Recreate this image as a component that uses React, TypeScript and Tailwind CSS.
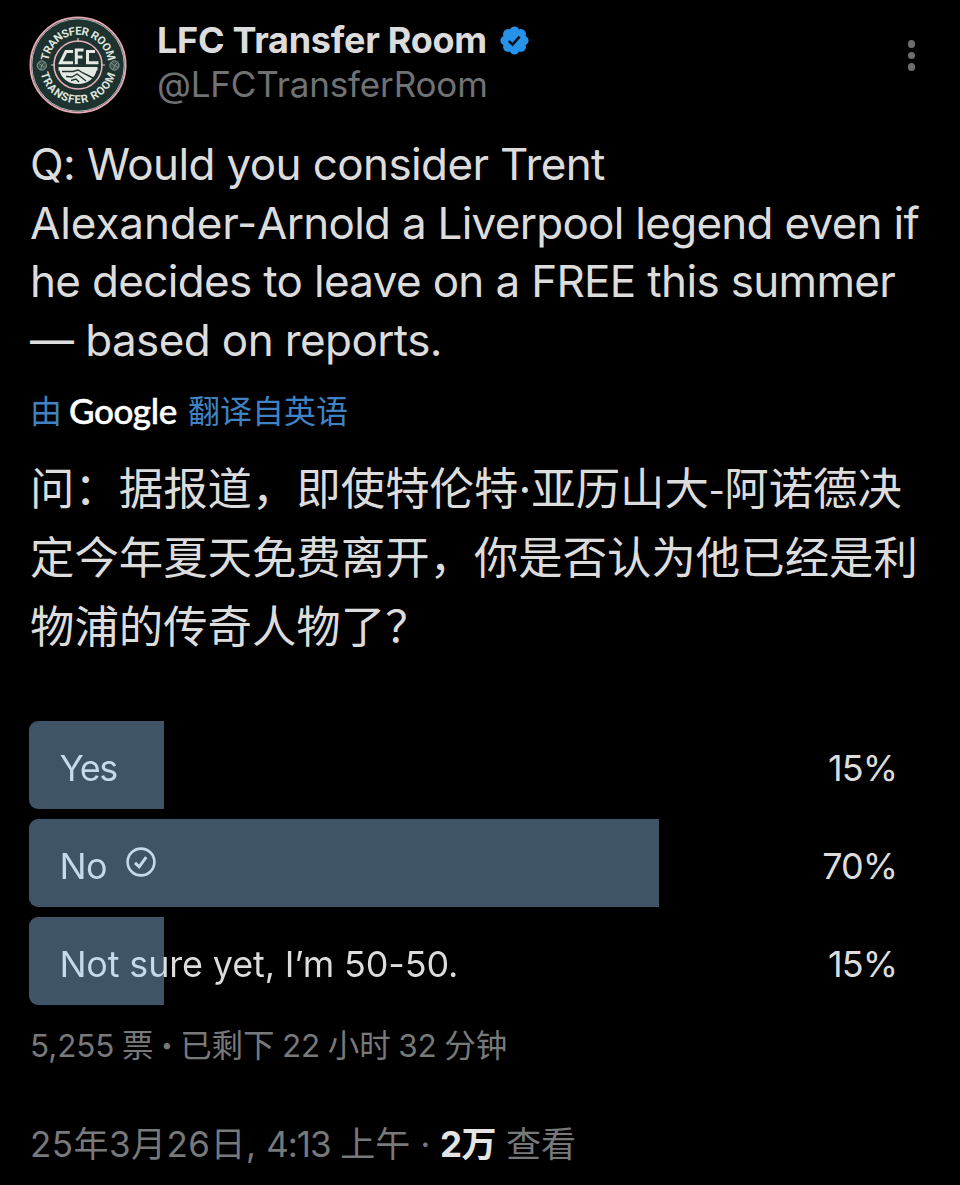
const questionLines = [
  [{ text: "Q: Would you consider Trent", tracking: "tracking-[-0.62px]" }],
  [
    { text: "Alexander-", tracking: "tracking-[-0.100px]" },
    { text: "Arnold a Liverpool legend even if", tracking: "tracking-[-0.73px]" },
  ],
  [{ text: "he decides to leave on a FREE this summer", tracking: "tracking-[-0.67px]" }],
  [{ text: "— based on reports.", tracking: "tracking-[-0.6px]" }],
];

const options = [
  {
    label: "Yes",
    percent: "15%",
    bar: "w-[135px]",
    text: "bg-[#c3dbea] tracking-[-1.4px] pr-[2px]",
    voted: false,
  },
  {
    label: "No",
    percent: "70%",
    bar: "w-[630px]",
    text: "bg-[#c3dbea] tracking-[-0.6px]",
    voted: true,
  },
  {
    label: "Not sure yet, I’m 50-50.",
    percent: "15%",
    bar: "w-[135px]",
    text: "bg-[linear-gradient(90deg,#c3dbea_105px,#dcdcdc_105px)] tracking-[-0.17px]",
    voted: false,
  },
];

function Avatar() {
  return (
    <svg viewBox="0 0 100 100" className="size-[100px] shrink-0">
      <defs>
        <path id="arc-top" d="M 20.4 54 A 29.9 29.9 0 1 1 79.6 54" />
        <path id="arc-bottom" d="M 11.9 46 A 38.3 38.3 0 1 0 88.1 46" />
      </defs>
      <circle cx="50" cy="50" r="47.6" fill="#1e3330" stroke="#e9a9b6" strokeWidth="1.8" />
      <circle cx="50" cy="50" r="46.2" fill="none" stroke="#d8d5d2" strokeWidth="0.8" />
      <g fill="#dfe6df" fontFamily="Roboto, sans-serif" fontWeight="700" fontSize="11.2" textAnchor="middle">
        <text letterSpacing="-0.4">
          <textPath href="#arc-top" startOffset="50%">
            TRANSFER ROOM
          </textPath>
        </text>
        <text letterSpacing="0.9">
          <textPath href="#arc-bottom" startOffset="50%">
            TRANSFER ROOM
          </textPath>
        </text>
      </g>
      <g fill="#3c514c" stroke="#8d9e98" strokeWidth="1">
        <circle cx="13.8" cy="50.5" r="4.6" />
        <circle cx="86.500" cy="50.5" r="4.6" />
      </g>
      <g fill="none" stroke="#8d9e98" strokeWidth="0.8">
        <path d="M10.500 48l3.300 2.500 3-3M13.800 50.500l-1 4.500M13.800 50.500l3.500 2" />
        <path d="M83.200 48l3.300 2.500 3-3M86.500 50.500l-1 4.500M86.500 50.500l3.500 2" />
      </g>
      <circle cx="50" cy="50" r="24" fill="#1e3330" stroke="#e6aeb8" strokeWidth="1.6" />
      <path d="M50 23v4M73 50h4M23 50h4" stroke="#e6c8cc" strokeWidth="1.200" />
      {/* crest: LFC over a handshake */}
      <g fill="none" stroke="#e4e9e3" strokeWidth="3">
        <path d="M45 36.500H38L32.500 47.700H45" />
        <path d="M55.500 35H48.300V49.300M48.300 42H54.500" />
        <path d="M67 36.500H59.500V47.700H70.500" />
      </g>
      <path d="M30.500 52H69.500V55.500H68.500C67 63 60 69 50 69S33 63 31.500 55.500H30.500Z" fill="#e4e9e3" />
      <path
        d="M34 56.500H45L50 55L55 58L65 63M38 61.500L44 62L49 59L53 62L58 66M43 65.500L48 64L51 67"
        fill="none"
        stroke="#1e3330"
        strokeWidth="1.400"
      />
    </svg>
  );
}

function VerifiedBadge() {
  return (
    <svg viewBox="0 0 22 22" className="size-[33px]">
      <path
        fill="#2793e8"
        d="M20.396 11c-.018-.646-.215-1.275-.57-1.816-.354-.54-.852-.972-1.438-1.246.223-.607.27-1.264.14-1.897-.131-.634-.437-1.218-.882-1.687-.47-.445-1.053-.75-1.687-.882-.633-.13-1.290-.083-1.897.140-.273-.587-.704-1.086-1.245-1.440S11.647 1.620 11 1.604c-.646.017-1.273.213-1.813.568s-.969.854-1.240 1.440c-.608-.223-1.267-.272-1.902-.140-.635.130-1.220.436-1.690.882-.445.470-.749 1.055-.878 1.688-.130.633-.080 1.290.144 1.896-.587.274-1.087.705-1.443 1.245-.356.540-.555 1.170-.574 1.817.020.647.218 1.276.574 1.817.356.540.856.972 1.443 1.245-.224.606-.274 1.263-.144 1.896.130.634.433 1.218.877 1.688.470.443 1.054.747 1.687.878.633.132 1.290.084 1.897-.136.274.586.705 1.084 1.246 1.439.540.354 1.170.551 1.816.569.647-.016 1.276-.213 1.817-.567s.972-.854 1.245-1.440c.604.239 1.266.296 1.903.164.636-.132 1.220-.447 1.680-.907.460-.460.776-1.044.908-1.681s.075-1.299-.165-1.903c.586-.274 1.084-.705 1.439-1.246.354-.540.551-1.170.569-1.816z"
      />
      <path fill="none" stroke="#06131f" strokeWidth="1.700" d="M7.200 11.200l2.500 2.500 4.700-5.300" />
    </svg>
  );
}

function VotedIcon() {
  return (
    <svg viewBox="0 0 30 30" className="size-[30px]" fill="none" stroke="#c3dbea">
      <circle cx="15" cy="15" r="13.400" strokeWidth="2.600" />
      <path d="M9 15.800l4.200 4 7-9.600" strokeWidth="3" />
    </svg>
  );
}

export default function App() {
  return (
    <main className="w-[960px] h-[1185px] overflow-hidden bg-black px-[30px] pt-[14px] font-[Inter,'Noto_Sans_CJK_SC',sans-serif] text-[#dcdcdc] whitespace-nowrap">
      {/* Header */}
      <header className="flex h-[101px] -ml-[2px]">
        <div className="pt-[1px]">
          <Avatar />
        </div>
        <div className="ml-[29px] flex-1">
          <div className="flex items-center h-[52px] gap-[11px]">
            <h1 className="text-[36px] font-bold tracking-[-0.28px]">LFC Transfer Room</h1>
            <VerifiedBadge />
          </div>
          <p className="h-[36px] leading-[36px] text-[35px] tracking-[-0.15px] text-[#707274]">@LFCTransferRoom</p>
        </div>
        <button className="flex flex-col gap-[4px] pt-[26px] mr-[15px]" aria-label="More">
          <span className="size-[7.500px] rounded-full bg-[#6c6e70]" />
          <span className="size-[7.500px] rounded-full bg-[#6c6e70]" />
          <span className="size-[7.500px] rounded-full bg-[#6c6e70]" />
        </button>
      </header>

      {/* Original text */}
      <div className="mt-[20px] text-[44px] leading-[58.700px]">
        {questionLines.map((line, i) => (
          <p key={i}>
            {line.map((part) => (
              <span key={part.text} className={part.tracking}>
                {part.text}
              </span>
            ))}
          </p>
        ))}
      </div>

      {/* Translation */}
      <div className="mt-[19px] h-[46px] flex items-center text-[32px] text-[#3f83c4]">
        <span>由</span>
        <span className="ml-[7px] -mt-[3px] w-[119px] font-[Lato] font-medium text-[35px] tracking-[-0.400px] text-white [-webkit-text-stroke:0.500px_white]">
          Google
        </span>
        <span>翻译自英语</span>
      </div>
      <div className="mt-[16px] text-[44.400px] leading-[69.300px]">
        <p>
          问：据报道，即使特伦特<span className="inline-block w-[13px] text-center font-[Inter]">·</span>亚历山大
          <span className="font-['Noto_Sans_CJK_SC']">-</span>阿诺德决
        </p>
        <p>定今年夏天免费离开，你是否认为他已经是利</p>
        <p>物浦的传奇人物了？</p>
      </div>

      {/* Poll */}
      <div className="mt-[58px] -ml-[0.600px] flex flex-col gap-[10px]">
        {options.map((o) => (
          <div key={o.label} className="grid h-[88px] items-center">
            <div className={`col-start-1 row-start-1 h-full rounded-l-[9px] bg-[#405467] ${o.bar}`} />
            <div className="col-start-1 row-start-1 flex items-center pl-[30px] pr-[33px] pt-[6px] text-[36px]">
              <span className={`bg-clip-text text-transparent ${o.text}`}>{o.label}</span>
              {o.voted && (
                <span className="ml-[19px] -mt-[7px]">
                  <VotedIcon />
                </span>
              )}
              <span className="ml-auto tracking-[-1px]">{o.percent}</span>
            </div>
          </div>
        ))}
      </div>

      {/* Meta */}
      <p className="mt-[18px] h-[46px] leading-[46px] text-[31.500px] tracking-[-0.120px] [word-spacing:-1.100px] text-[#77797b]">
        5,255 票 <span className="font-black">·</span> 已剩下 22 小时 32 分钟
      </p>
      <p className="mt-[52px] h-[46px] leading-[46px] text-[35px] text-[#77797b]">
        <span className="tracking-[0.450px]">25年3月26日,</span> <span className="tracking-[-1.100px]">4:13</span> 上午 ·{" "}
        <span className="font-bold text-[#e4e4e4] tracking-[-0.500px]">2万</span> 查看
      </p>
    </main>
  );
}
